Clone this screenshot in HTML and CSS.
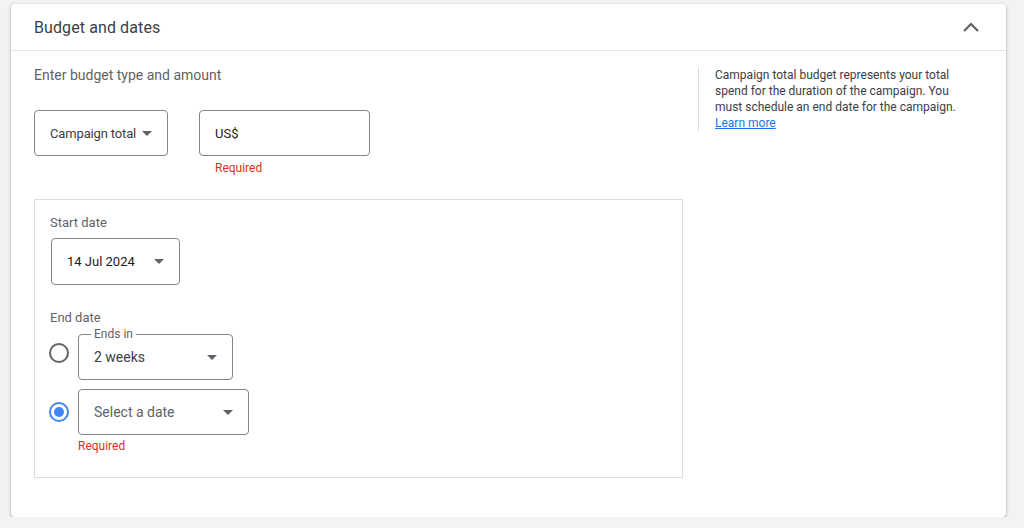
FILE: index.html
```html
<!DOCTYPE html>
<html lang="en">
<head>
    <meta charset="UTF-8">
    <meta name="viewport" content="width=device-width, initial-scale=1.0">
    <title>Budget and dates</title>
    <link rel="stylesheet" href="styles.css">
</head>
<body>
    <div class="card">
        <div class="card-header">
            <h2 class="card-title">Budget and dates</h2>
            <svg class="collapse" width="16" height="10" viewBox="0 0 16 10">
                <polyline points="1,9 8,2 15,9" fill="none" stroke="#5f6368" stroke-width="2.2"/>
            </svg>
        </div>

        <div class="card-body">
            <div class="main">
                <div class="section-title">Enter budget type and amount</div>

                <div class="budget-row">
                    <div class="select budget-type">
                        <span>Campaign total</span>
                        <span class="caret"></span>
                    </div>
                    <div>
                        <div class="input amount">US$</div>
                        <div class="error indent">Required</div>
                    </div>
                </div>

                <div class="dates">
                    <div class="label">Start date</div>
                    <div class="select start-date">
                        <span>14 Jul 2024</span>
                        <span class="caret"></span>
                    </div>

                    <div class="label end-label">End date</div>
                    <div class="option">
                        <span class="radio"></span>
                        <div class="select ends-in">
                            <span class="float-label">Ends in</span>
                            <span>2 weeks</span>
                            <span class="caret"></span>
                        </div>
                    </div>
                    <div class="option second">
                        <span class="radio checked"></span>
                        <div>
                            <div class="select end-date">
                                <span class="muted">Select a date</span>
                                <span class="caret"></span>
                            </div>
                            <div class="error">Required</div>
                        </div>
                    </div>
                </div>
            </div>

            <div class="help">
                Campaign total budget represents your total spend for the duration of the campaign. You must schedule an end date for the campaign.
                <a href="#">Learn more</a>
            </div>
        </div>
    </div>
</body>
</html>
```

FILE: styles.css
```css
body {
    margin: 0;
    padding: 4px 18px 0 11px;
    background: #f1f3f4;
    font-family: Roboto, "Liberation Sans", sans-serif;
    color: #3c4043;
}

.card {
    background: #fff;
    border-radius: 4px;
    box-shadow: 0 1px 2px rgba(60, 64, 67, 0.3), 0 1px 3px 1px rgba(60, 64, 67, 0.15);
}

.card-header {
    height: 46px;
    display: flex;
    align-items: center;
    justify-content: space-between;
    padding: 0 27px 0 23px;
    border-bottom: 1px solid #e3e5e8;
}

.card-title {
    margin: 0;
    font-size: 16px;
    font-weight: 400;
    color: #3c4043;
    letter-spacing: 0.1px;
}

.card-body {
    display: flex;
    padding: 14px 24px 39px 23px;
}

.main {
    width: 649px;
    margin-right: 15px;
}

.section-title {
    font-size: 14px;
    line-height: 20px;
    color: #5f6368;
}

.budget-row {
    display: flex;
    gap: 31px;
    margin-top: 25px;
}

.select,
.input {
    box-sizing: border-box;
    height: 46px;
    border: 1px solid #80868b;
    border-radius: 4px;
    display: flex;
    align-items: center;
    padding: 0 15px;
    font-size: 13px;
    color: #3c4043;
    position: relative;
}

.select {
    justify-content: space-between;
}

.budget-type {
    width: 134px;
    letter-spacing: -0.15px;
}

.amount {
    width: 171px;
    color: #202124;
}

.caret {
    width: 0;
    height: 0;
    border-left: 5px solid transparent;
    border-right: 5px solid transparent;
    border-top: 5px solid #5f6368;
}

.error {
    margin-top: 3px;
    font-size: 12px;
    line-height: 16px;
    color: #d93025;
}

.error.indent {
    margin-top: 4px;
    padding-left: 16px;
}

.dates {
    margin-top: 23px;
    border: 1px solid #dadce0;
    padding: 13px 16px 23px;
}

.label {
    margin-left: -1px;
    font-size: 13px;
    line-height: 20px;
    color: #5f6368;
}

.start-date {
    width: 129px;
    height: 47px;
    margin-top: 5px;
    color: #202124;
}

.end-label {
    margin-top: 23px;
}

.option {
    display: flex;
    align-items: flex-start;
    gap: 9px;
    margin-left: -2px;
    margin-top: 6px;
}

.option.second {
    margin-top: 9px;
}

.radio {
    box-sizing: border-box;
    width: 20px;
    height: 20px;
    margin-top: 9px;
    border: 2px solid #5f6368;
    border-radius: 50%;
    display: flex;
    align-items: center;
    justify-content: center;
}

.radio.checked {
    margin-top: 13px;
    border-color: #4285f4;
}

.radio.checked::after {
    content: "";
    width: 10px;
    height: 10px;
    border-radius: 50%;
    background: #4285f4;
}

.ends-in {
    width: 155px;
    font-size: 14px;
}

.end-date {
    width: 171px;
    font-size: 14px;
}

.muted {
    color: #5f6368;
}

.float-label {
    position: absolute;
    top: -8px;
    left: 12px;
    padding: 0 3px;
    background: #fff;
    font-size: 12px;
    line-height: 14px;
    color: #5f6368;
}

.help {
    width: 260px;
    margin-top: 2px;
    align-self: flex-start;
    border-left: 1px solid #dadce0;
    padding-left: 16px;
    font-size: 12px;
    line-height: 16px;
    color: #3c4043;
}

.help a {
    color: #1a73e8;
}
```
